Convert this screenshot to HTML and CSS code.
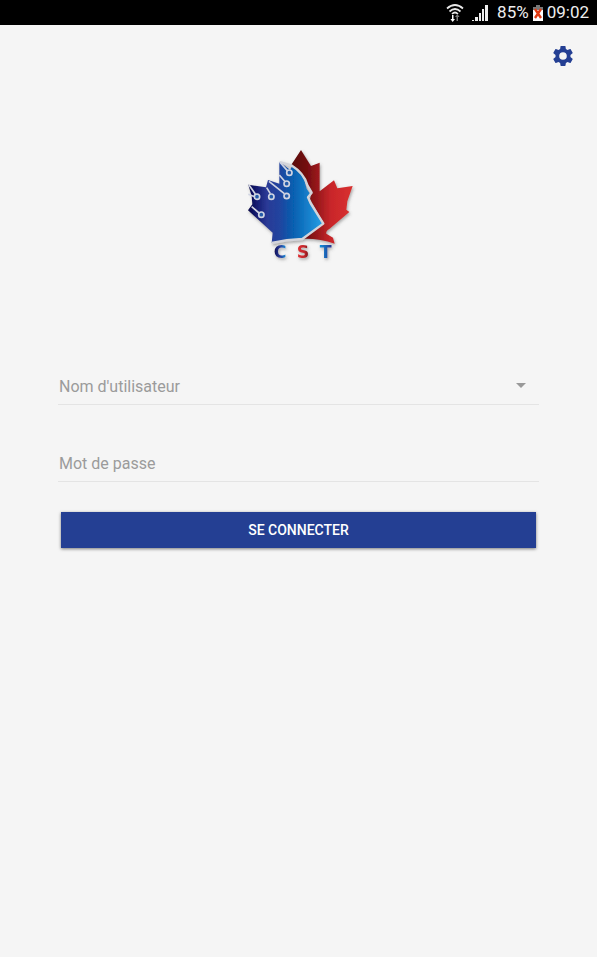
FILE: index.html
```html
<!DOCTYPE html>
<html lang="fr">
<head>
<meta charset="utf-8">
<meta name="viewport" content="width=device-width, initial-scale=1">
<title>CST</title>
<link rel="stylesheet" href="styles.css">
</head>
<body>
<div class="status">
  <svg class="wifi" width="18" height="20" viewBox="0 0 18 20" aria-hidden="true">
    <g fill="none" stroke="#e8e8e8" stroke-width="1.7">
      <path d="M1 5.5Q9-1.5 17 5.5"/>
      <path d="M3.500 8.500Q9 3.500 14.500 8.500"/>
      <path d="M6 11Q9 8 12 11"/>
    </g>
    <path d="M6 12h1.500v4H9l-2.300 3-2.300-3H6z" fill="#fff"/>
    <path d="M10.500 18v-4H9l2.300-3 2.300 3H12v4z" fill="#777"/>
  </svg>
  <svg class="signal" width="18" height="18" viewBox="0 0 18 18" fill="#eee" aria-hidden="true">
    <path d="M1 16h2v1H1zM4 13h3v4H4zM8 9h2v8H8zM11 5h2v12h-2zM14 1h3v16h-3z"/>
  </svg>
  <span>85%</span>
  <svg class="battery" width="10" height="18" viewBox="0 0 10 18" aria-hidden="true">
    <path d="M3 1h4v2h3v14H0V3h3z" fill="#fff"/>
    <path d="M3 1h4v2h3v3H0V3h3z" fill="#777"/>
    <path d="M2 5L8 14M8 5L2 14" stroke="#e33a12" stroke-width="2.400"/>
  </svg>
  <span>09:02</span>
</div>
<header class="toolbar">
  <button class="settings" type="button" aria-label="Paramètres">
    <svg width="24" height="24" viewBox="0 0 24 24" fill="currentColor"><path d="M19.430 12.980c.04-.32.07-.64.07-.98s-.03-.66-.07-.98l2.110-1.650c.19-.15.24-.42.12-.64l-2-3.460c-.12-.22-.39-.3-.61-.22l-2.490 1c-.52-.4-1.080-.73-1.690-.98l-.38-2.650C14.460 2.180 14.250 2 14 2h-4c-.25 0-.46.18-.49.42l-.38 2.650c-.61.25-1.170.59-1.690.98l-2.490-1c-.23-.09-.49 0-.61.22l-2 3.460c-.13.22-.07.49.12.64l2.110 1.650c-.04.32-.07.65-.07.98s.03.66.07.98l-2.110 1.650c-.19.15-.24.42-.12.64l2 3.460c.12.22.39.3.61.22l2.490-1c.52.4 1.080.73 1.690.98l.38 2.650c.03.24.24.42.49.42h4c.25 0 .46-.18.49-.42l.38-2.650c.61-.25 1.170-.59 1.690-.98l2.490 1c.23.09.49 0 .61-.22l2-3.460c.12-.22.07-.49-.12-.64zM12 15.800a3.800 3.800 0 1 1 0-7.600 3.800 3.800 0 0 1 0 7.600z"/></svg>
  </button>
</header>
<main class="login">
  <svg class="logo" width="121" height="125" viewBox="-6 0 363 375" role="img" aria-label="CST">
    <defs>
      <linearGradient id="blue" gradientUnits="userSpaceOnUse" x1="24" y1="0" x2="250" y2="0">
        <stop offset="0" stop-color="#05054a"/>
        <stop offset=".12" stop-color="#161c72"/>
        <stop offset=".25" stop-color="#2a3a96"/>
        <stop offset=".42" stop-color="#21449f"/>
        <stop offset=".6" stop-color="#065fb0"/>
        <stop offset="1" stop-color="#27a0e6"/>
      </linearGradient>
      <linearGradient id="red" gradientUnits="userSpaceOnUse" x1="155" y1="0" x2="338" y2="0">
        <stop offset="0" stop-color="#5a0709"/>
        <stop offset=".25" stop-color="#740d10"/>
        <stop offset=".65" stop-color="#c9272b"/>
        <stop offset="1" stop-color="#d9302f"/>
      </linearGradient>
      <linearGradient id="ink-c"><stop stop-color="#080a4e"/><stop offset=".5" stop-color="#2b3c98"/><stop offset="1" stop-color="#1594dc"/></linearGradient>
      <linearGradient id="ink-s"><stop stop-color="#e33134"/><stop offset=".6" stop-color="#c3262b"/><stop offset="1" stop-color="#6d1117"/></linearGradient>
      <linearGradient id="ink-t"><stop stop-color="#0d92db"/><stop offset="1" stop-color="#2b3490"/></linearGradient>
      <filter id="shade" x="-10%" y="-10%" width="125%" height="125%">
        <feDropShadow dx="3" dy="5" stdDeviation="4" flood-color="#555" flood-opacity=".5"/>
      </filter>
    </defs>
    <g filter="url(#shade)">
      <path fill="url(#red)" d="M183 21L154 65Q190 88 202 122L214 150L210 169L252 241L190 287Q240 286 284 302L279 284L259 272Q257 264 268 258L328 207L319 200L322 175L338 129L292 136L282 112L239 145V59L213 69Z"/>
      <path fill="url(#blue)" d="M118 56V122L84 111L78 133L25 125L35 160L37 184L24 202L98 269L95 300Q150 288 184 289L250 243L207 169L210 152L200 137Q192 91 157 69L150 80Z"/>
      <path fill="none" stroke="#d3d4da" stroke-width="7" stroke-linejoin="round" d="M120 57L154 67Q192 91 202 126L215 149L204 163L212 181L250 242L187 288Q140 289 95 300"/>
    </g>
    <g fill="none" stroke="#d0d4e2" stroke-width="5">
      <path d="M119 57L142 83M118 96L134 115M87 115L133 152M80 134L91 152M27 126L46 153M25 154L44 161M35 191L57 210"/>
      <g fill="#245ba9">
        <circle cx="148" cy="89" r="8"/><circle cx="140" cy="122" r="8"/><circle cx="140" cy="159" r="8"/><circle cx="94" cy="161" r="8"/><circle cx="51" cy="161" r="8"/><circle cx="64" cy="215" r="8"/>
      </g>
    </g>
    <g class="brand" text-anchor="middle" filter="url(#shade)">
      <text x="120" y="345" fill="url(#ink-c)">C</text>
      <text x="189" y="345" fill="url(#ink-s)">S</text>
      <text x="257" y="345" fill="url(#ink-t)">T</text>
    </g>
  </svg>
  <form class="form">
    <div class="field">
      <select class="control" aria-label="Nom d'utilisateur"><option>Nom d'utilisateur</option></select>
      <svg class="caret" width="10" height="5" viewBox="0 0 10 5" aria-hidden="true"><path d="M0 0h10L5 5z" fill="#999"/></svg>
    </div>
    <div class="field">
      <input class="control" type="password" placeholder="Mot de passe" aria-label="Mot de passe">
    </div>
    <button class="submit" type="button">SE CONNECTER</button>
  </form>
</main>
</body>
</html>
```
FILE: styles.css
```css
* {
  box-sizing: border-box;
}

body {
  margin: 0;
  min-height: 100vh;
  background: #f5f5f5;
  font-family: Roboto, "Liberation Sans", sans-serif;
}

.status {
  display: flex;
  align-items: center;
  justify-content: flex-end;
  height: 25px;
  padding-right: 8px;
  background: #000;
  color: #eee;
  font-size: 17px;
  line-height: 25px;
}

.wifi {
  margin-right: 7px;
}

.signal {
  margin-right: 8px;
}

.battery {
  margin: 0 4px;
}

.toolbar {
  display: flex;
  justify-content: flex-end;
  padding: 19px 22px 0;
}

.settings {
  display: flex;
  padding: 0;
  border: 0;
  background: none;
  color: #243f93;
}

.login {
  display: flex;
  flex-direction: column;
  align-items: center;
  padding: 75px 58px 0;
}

.brand {
  font-family: "DejaVu Sans", sans-serif;
  font-size: 52px;
  font-weight: 700;
}

.form {
  display: flex;
  flex-direction: column;
  width: 100%;
  margin-top: 99px;
}

.field {
  position: relative;
  display: flex;
  margin-bottom: 39px;
  border-bottom: 1px solid #e4e4e4;
}

.field + .field {
  margin-bottom: 30px;
}

.control {
  width: 100%;
  height: 37px;
  padding: 2px 1px 0;
  border: 0;
  border-radius: 0;
  outline: 0;
  appearance: none;
  background: transparent;
  color: #9b9b9b;
  font: 16px Roboto, "Liberation Sans", sans-serif;
}

.control::placeholder {
  color: #9b9b9b;
}

.caret {
  position: absolute;
  top: 16px;
  right: 13px;
  pointer-events: none;
}

.submit {
  height: 36px;
  margin: 0 3px;
  border: 0;
  background: #243f93;
  box-shadow: 0 1px 3px rgba(0, 0, 0, .5);
  color: #fff;
  font: 500 14px Roboto, "Liberation Sans", sans-serif;
}
```
